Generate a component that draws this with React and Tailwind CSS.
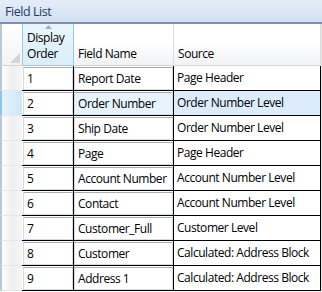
import React from "react";

const rows = [
    { order: "1", name: "Report Date", source: "Page Header" },
    { order: "2", name: "Order Number", source: "Order Number Level", selected: true },
    { order: "3", name: "Ship Date", source: "Order Number Level" },
    { order: "4", name: "Page", source: "Page Header" },
    { order: "5", name: "Account Number", source: "Account Number Level" },
    { order: "6", name: "Contact", source: "Account Number Level" },
    { order: "7", name: "Customer_Full", source: "Customer Level" },
    { order: "8", name: "Customer", source: "Calculated: Address Block" },
    { order: "9", name: "Address 1", source: "Calculated: Address Block" },
];

// textbox look of the editable cells
const CellBox = ({ value, selected }) => (
    <div
        className={`h-[23px] w-full overflow-hidden whitespace-nowrap border border-[#d6dbe4] border-t-[#abadb3] pl-[3px] leading-[21px] ${
            selected ? "bg-[#e6f3fc]" : "bg-white"
        }`}
    >
        {value}
    </div>
);

const FieldRow = ({ row }) => (
    <div className="flex h-[25px]">
        <div
            className={`w-[22px] shrink-0 border-l-2 border-b border-b-[#e6e6e6] ${
                row.selected
                    ? "border-l-[#8cc3ea] bg-gradient-to-r from-[#e4f2fb] to-[#cfe7f8]"
                    : "border-l-[#b8c8dc] bg-gradient-to-r from-white via-[#efefef] to-[#f6f6f6]"
            }`}
        />
        <div className="flex w-[52px] shrink-0 items-center border-b border-r border-black pl-[1px]">
            <CellBox value={row.order} />
        </div>
        <div className="flex w-[100px] shrink-0 items-center border-b border-r border-black">
            <CellBox value={row.name} selected={row.selected} />
        </div>
        <div
            className={`w-[147px] shrink-0 overflow-hidden whitespace-nowrap border-b border-r border-black pl-[3px] leading-[24px] ${
                row.selected ? "bg-[#dcecfc]" : "bg-white"
            }`}
        >
            {row.source}
        </div>
        <div className="w-[1px] shrink-0 bg-[#e8e8e8]" />
    </div>
);

export default function App() {
    return (
        <div className="h-[292px] w-[322px] overflow-hidden bg-white text-[12px] tracking-[-0.45px] text-black font-['Open_Sans',sans-serif]">
            {/* Title bar */}
            <div className="h-[24px] border-b-2 border-b-[#7590b2] bg-gradient-to-b from-[#e4eef8] to-[#d2e0f1] pl-[5px] text-[12.5px] leading-[23px] text-[#1e3a5f]">
                Field List
            </div>

            {/* Column headers */}
            <div className="flex h-[42px]">
                <div className="relative w-[22px] shrink-0 border-l-2 border-l-[#b8c8dc] border-b border-b-[#d5d5d5] bg-gradient-to-b from-white to-[#f3f3f3]">
                    <svg className="absolute bottom-[2px] right-[2px]" width="10" height="10" viewBox="0 0 10 10">
                        <polygon points="10,0 10,10 0,10" fill="#d4d4d4" />
                    </svg>
                </div>
                <div className="relative flex w-[52px] shrink-0 flex-col justify-end border-x border-b border-[#96cdee] bg-gradient-to-b from-[#eaf6fd] to-[#d9eefb] pb-[3px] pl-[4px] leading-[16px]">
                    <svg className="absolute left-[22px] top-[1px]" width="7" height="4" viewBox="0 0 7 4">
                        <polygon points="3.5,0 7,4 0,4" fill="#97b3cf" />
                    </svg>
                    <span>Display</span>
                    <span>Order</span>
                </div>
                <div className="flex w-[100px] shrink-0 items-end border-b border-r border-b-[#d5d5d5] border-r-[#dcdcdc] bg-gradient-to-b from-white from-45% to-[#f1f2f4] pb-[3px] pl-[4px] leading-[16px]">
                    Field Name
                </div>
                <div className="flex w-[147px] shrink-0 items-end border-b border-r border-b-[#d5d5d5] border-r-[#dcdcdc] bg-gradient-to-b from-white from-45% to-[#f1f2f4] pb-[3px] pl-[4px] leading-[16px]">
                    Source
                </div>
                <div className="w-[1px] shrink-0 bg-[#e8e8e8]" />
            </div>

            {rows.map((row) => (
                <FieldRow key={row.order} row={row} />
            ))}
        </div>
    );
}
